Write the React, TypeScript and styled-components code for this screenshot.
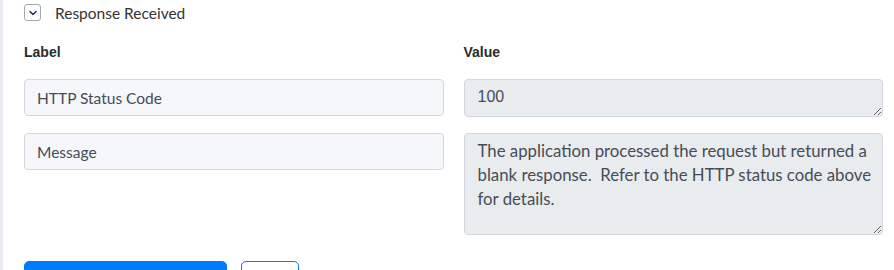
import styled, { createGlobalStyle } from "styled-components";
import { FiChevronDown } from "react-icons/fi";

const GlobalStyle = createGlobalStyle`
  html, body {
    margin: 0;
    padding: 0;
    background: #ffffff;
    overflow: hidden;
  }
  body {
    font-family: Lato, "Open Sans", sans-serif;
    color: #333333;
  }
`

const StyledPanel = styled.div`
  border-left: 3px solid #e8ebf0;
  padding: 0 11px 0 21px;
  height: 270px;
  box-sizing: border-box;
  overflow: hidden;
`

const StyledHeader = styled.div`
  display: flex;
  align-items: center;
  gap: 14px;
  height: 25px;
  font-size: 15.5px;
  color: #333333;
`

const StyledToggle = styled.span`
  display: inline-flex;
  align-items: center;
  justify-content: center;
  width: 17px;
  height: 17px;
  box-sizing: border-box;
  border: 1px solid #a4a9b0;
  border-radius: 3px;
  color: #1f3355;
`

const StyledGrid = styled.div`
  display: grid;
  grid-template-columns: 1fr 1fr;
  column-gap: 20px;
  row-gap: 16px;
  align-items: start;
  margin-top: 17px;
`

const StyledHeading = styled.div`
  font-family: "Liberation Sans", Arial, sans-serif;
  font-size: 14px;
  font-weight: 700;
  line-height: 20px;
  color: #2b2b2b;
  margin-bottom: 1px;
`

const StyledInput = styled.input`
  display: block;
  width: 100%;
  height: 37px;
  box-sizing: border-box;
  padding: 0 12px;
  border: 1px solid #d3d7dd;
  border-radius: 4px;
  background: #f5f7fa;
  font-family: Lato, "Open Sans", sans-serif;
  font-size: 15.5px;
  color: #464c55;
  outline: none;
`

const StyledValue = styled.textarea<{ $tall?: boolean; $mono?: boolean }>`
  display: block;
  width: 100%;
  height: ${(p) => (p.$tall ? "102px" : "38px")};
  box-sizing: border-box;
  padding: 5px 8px 5px 13px;
  border: 1px solid #d3d7dd;
  border-radius: 4px;
  background: #e9ecef;
  font-family: ${(p) => (p.$mono ? '"Liberation Sans", Arial, sans-serif' : 'Lato, "Open Sans", sans-serif')};
  font-size: ${(p) => (p.$mono ? "16px" : "16.8px")};
  line-height: 24px;
  color: #464c55;
  resize: vertical;
  outline: none;
  overflow: hidden;
`

const StyledActions = styled.div`
  display: flex;
  gap: 14px;
  margin-top: 26px;
`

const StyledButton = styled.button<{ $outline?: boolean }>`
  width: ${(p) => (p.$outline ? "58px" : "203px")};
  height: 38px;
  border-radius: 5px;
  border: 1px solid #007bff;
  background: ${(p) => (p.$outline ? "#ffffff" : "#007bff")};
  color: ${(p) => (p.$outline ? "#007bff" : "#ffffff")};
  font-family: Lato, sans-serif;
  font-size: 15px;
  padding: 0;
`

export default function App(): JSX.Element {
  return (
    <>
      <GlobalStyle />
      <StyledPanel>
        <StyledHeader>
          <StyledToggle>
            <FiChevronDown size={12} strokeWidth={3} />
          </StyledToggle>
          <span>Response Received</span>
        </StyledHeader>

        <StyledGrid>
          <StyledHeading>Label</StyledHeading>
          <StyledHeading>Value</StyledHeading>

          <StyledInput readOnly value="HTTP Status Code" />
          <StyledValue readOnly $mono value="100" />

          <StyledInput readOnly value="Message" />
          <StyledValue
            readOnly
            $tall
            value="The application processed the request but returned a blank response.  Refer to the HTTP status code above for details."
          />
        </StyledGrid>

        <StyledActions>
          <StyledButton />
          <StyledButton $outline />
        </StyledActions>
      </StyledPanel>
    </>
  )
}
